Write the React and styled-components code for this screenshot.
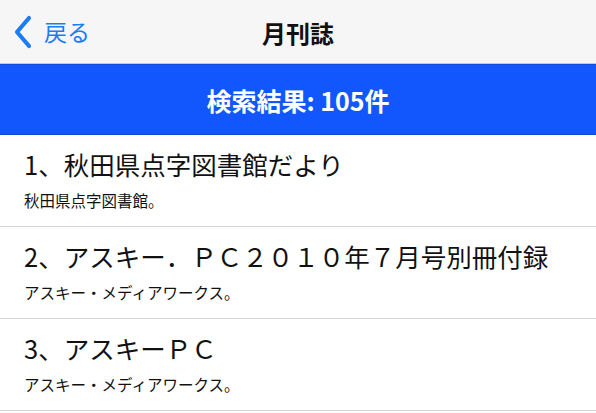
import React from "react";
import styled, { createGlobalStyle } from "styled-components";

const Global = createGlobalStyle`
  html, body { margin: 0; padding: 0; background: #fff; }
  body { font-family: "Noto Sans CJK JP", "Noto Sans", sans-serif; }
`;

const Page = styled.div`
  width: 596px;
  display: flex;
  flex-direction: column;
`;

const NavBar = styled.header`
  height: 63px;
  background: #f7f6f6;
  border-bottom: 1px solid #c9c9cc;
  display: grid;
  grid-template-columns: 1fr auto 1fr;
  align-items: center;
`;

const Back = styled.div`
  display: flex;
  align-items: center;
  gap: 11px;
  padding-left: 13px;
  color: #1b7cf4;
  font-size: 23px;
  line-height: 1;
`;

const Title = styled.h1`
  margin: 0;
  font-size: 24px;
  font-weight: 700;
  color: #111;
  padding-top: 2px;
`;

const Banner = styled.div`
  height: 68px;
  background: #1257fd;
  border-top: 1px solid #0f4fe0;
  border-bottom: 1px solid #0e4cd6;
  display: flex;
  align-items: center;
  justify-content: center;
  color: #fff;
  font-size: 25px;
  font-weight: 700;
  padding-top: 1px;
`;

const List = styled.ul`
  list-style: none;
  margin: 0;
  padding: 0;
`;

const Row = styled.li`
  height: 91px;
  border-bottom: 1px solid #d6d6d8;
  padding: 0 24px;
  display: flex;
  flex-direction: column;
  justify-content: center;
  gap: 12px;
  box-sizing: content-box;
`;

const RowTitle = styled.div`
  font-size: 25.5px;
  color: #111;
  line-height: 30px;
  white-space: nowrap;
  margin-top: -2px;
`;

const RowSub = styled.div`
  font-size: 15.5px;
  color: #111;
  line-height: 19px;
`;

const items = [
  { t: "1、秋田県点字図書館だより", s: "秋田県点字図書館。" },
  { t: "2、アスキー．ＰＣ２０１０年７月号別冊付録", s: "アスキー・メディアワークス。" },
  { t: "3、アスキーＰＣ", s: "アスキー・メディアワークス。" },
];

export default function App() {
  return (
    <Page>
      <Global />
      <NavBar>
        <Back>
          <svg width="20" height="34" viewBox="0 0 20 34">
            <path d="M16 3 L4 17 L16 31" fill="none" stroke="#1b7cf4" strokeWidth="4.2" strokeLinecap="round" strokeLinejoin="round" />
          </svg>
          <span>戻る</span>
        </Back>
        <Title>月刊誌</Title>
        <div />
      </NavBar>
      <Banner>検索結果: 105件</Banner>
      <List>
        {items.map((it, i) => (
          <Row key={i}>
            <RowTitle>{it.t}</RowTitle>
            <RowSub>{it.s}</RowSub>
          </Row>
        ))}
      </List>
    </Page>
  );
}
